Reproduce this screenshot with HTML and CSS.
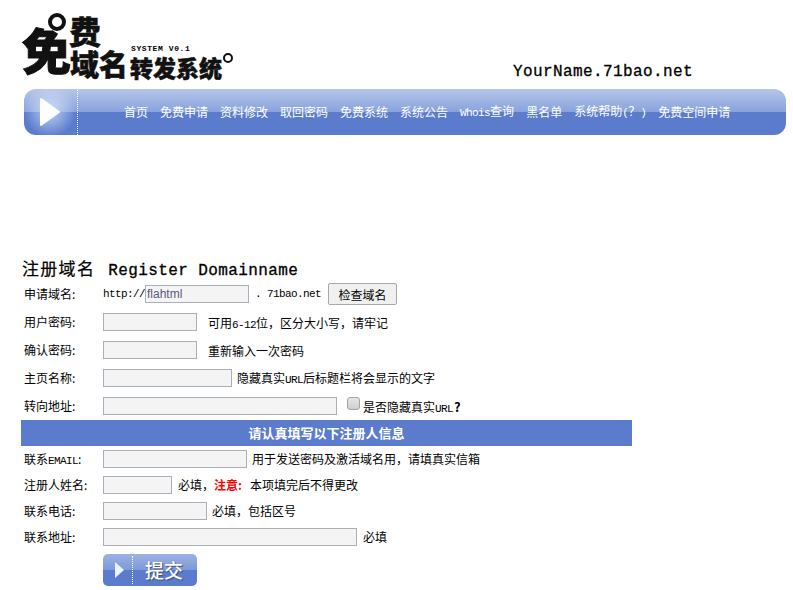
FILE: index.html
```html
<!DOCTYPE html>
<html lang="zh">
<head>
<meta charset="utf-8">
<title>注册域名</title>
<link rel="stylesheet" href="styles.css">
</head>
<body>
<header class="top">
  <div class="logo">
    <span class="lg lg-mian">免</span>
    <span class="lg lg-fei">费</span>
    <span class="lg lg-yu">域名</span>
    <span class="lg lg-zhuan">转发系统</span>
    <span class="lg-sys">SYSTEM V0.1</span>
    <i class="ring ring-big"></i>
    <i class="ring ring-small"></i>
  </div>
  <div class="domain">YourName.71bao.net</div>
</header>
<nav class="nav">
  <div class="nav-icon">
    <svg class="nav-play" width="22" height="30" viewBox="0 0 22 30"><path d="M2 2 L20 15 L2 28 Z" fill="#fff" stroke="#fff" stroke-width="2" stroke-linejoin="round"/></svg>
  </div>
  <div class="nav-items">
    <a>首页</a><a>免费申请</a><a>资料修改</a><a>取回密码</a><a>免费系统</a><a>系统公告</a><a><span class="lat">Whois</span>查询</a><a>黑名单</a><a>系统帮助<span class="lat">(</span>？<span class="lat">)</span></a><a>免费空间申请</a>
  </div>
</nav>
<main class="form">
  <h1 class="title">注册域名<span class="title-lat">Register Domainname</span></h1>
  <div class="row">
    <label class="lbl">申请域名:</label>
    <span class="lat">http://</span><input class="inp w104 inp-val" type="text" value="flahtml">
    <span class="lat dot">. 71bao.net</span><button class="check" type="button">检查域名</button>
  </div>
  <div class="row">
    <label class="lbl">用户密码:</label>
    <input class="inp w94" type="text"><span class="note note-w">可用<span class="lat">6-12</span>位，区分大小写，请牢记</span>
  </div>
  <div class="row">
    <label class="lbl">确认密码:</label>
    <input class="inp w94" type="text"><span class="note note-w">重新输入一次密码</span>
  </div>
  <div class="row">
    <label class="lbl">主页名称:</label>
    <input class="inp w129" type="text"><span class="note">隐藏真实<span class="lat">URL</span>后标题栏将会显示的文字</span>
  </div>
  <div class="row">
    <label class="lbl">转向地址:</label>
    <input class="inp w234" type="text"><input class="cb" type="checkbox"><span class="note-cb">是否隐藏真实<span class="lat">URL</span><b class="q">?</b></span>
  </div>
  <div class="banner">请认真填写以下注册人信息</div>
  <div class="row row-s">
    <label class="lbl">联系<span class="lat">EMAIL</span>:</label>
    <input class="inp w144" type="text"><span class="note">用于发送密码及激活域名用，请填真实信箱</span>
  </div>
  <div class="row row-s">
    <label class="lbl">注册人姓名:</label>
    <input class="inp w69" type="text"><span class="note note-n">必填，<b class="warn">注意:</b>本项填完后不得更改</span>
  </div>
  <div class="row row-s">
    <label class="lbl">联系电话:</label>
    <input class="inp w104" type="text"><span class="note">必填，包括区号</span>
  </div>
  <div class="row row-s">
    <label class="lbl">联系地址:</label>
    <input class="inp w254" type="text"><span class="note note-n">必填</span>
  </div>
  <button class="submit" type="button">
    <svg class="submit-play" width="11" height="18" viewBox="0 0 11 18"><path d="M1 1 L10 9 L1 17 Z" fill="#eef2fb"/></svg>
    <span class="submit-text">提交</span>
  </button>
</main>
</body>
</html>
```
FILE: styles.css
```css
* { box-sizing: border-box; }
html, body { margin: 0; padding: 0; overflow: hidden; }
body {
  height: 590px;
  background: #fff;
  color: #000;
  font-family: "Noto Sans CJK SC", sans-serif;
  font-size: 12px;
}
.top {
  height: 89px;
  display: flex;
  align-items: flex-end;
}
.logo {
  position: relative;
  width: 513px;
  height: 89px;
  flex: none;
}
.lg {
  position: absolute;
  font-weight: 900;
  line-height: 1;
  color: #111;
  white-space: nowrap;
  -webkit-text-stroke: 0.5px #111;
}
.lg-mian { left: 22px; top: 24px; font-size: 49px; -webkit-text-stroke-width: 1px; }
.lg-fei { left: 69px; top: 14px; font-size: 32px; }
.lg-yu { left: 70px; top: 49px; font-size: 29px; }
.lg-zhuan { left: 130px; top: 56px; font-size: 23px; }
.lg-sys {
  position: absolute;
  left: 131px;
  top: 44px;
  font-family: "Liberation Mono", monospace;
  font-size: 8px;
  font-weight: 700;
  letter-spacing: 0.6px;
  line-height: 10px;
  white-space: nowrap;
}
.ring {
  position: absolute;
  border-style: solid;
  border-color: #111;
  border-radius: 50%;
  background: #fff;
}
.ring-big { left: 48px; top: 13px; width: 18px; height: 18px; border-width: 4px; }
.ring-small { left: 223px; top: 53px; width: 10px; height: 10px; border-width: 2px; }
.domain {
  font-family: "Liberation Mono", monospace;
  font-size: 16px;
  letter-spacing: 0.4px;
  line-height: 20px;
  margin-bottom: 7px;
  white-space: nowrap;
  -webkit-text-stroke: 0.3px #000;
}
.nav {
  margin-left: 24px;
  width: 762px;
  height: 46px;
  border-radius: 12px;
  display: flex;
  background: linear-gradient(#b6c6e9 0, #88a2dc 50%, #5b7ccd 50%, #5b7ccd 100%);
  overflow: hidden;
}
.nav-icon {
  width: 54px;
  flex: none;
  display: flex;
  align-items: center;
  padding-left: 15px;
  border-right: 1px dotted #fff;
  background: radial-gradient(circle at 26px 22px, rgba(225, 238, 255, 0.75) 0, rgba(225, 238, 255, 0) 26px);
}
.nav-items {
  display: flex;
  align-items: center;
  gap: 12px;
  padding-left: 46px;
  color: #fff;
  white-space: nowrap;
  line-height: 46px;
}
.form {
  margin: 125px 0 0 21px;
  width: 611px;
}
.title {
  margin: 0 0 0 1px;
  font-size: 17px;
  font-weight: 400;
  line-height: 16px;
  height: 20px;
  letter-spacing: 1.3px;
  white-space: nowrap;
  -webkit-text-stroke: 0.2px #000;
}
.title-lat {
  margin-left: 13px;
  font-family: "Liberation Mono", monospace;
  font-size: 16px;
  letter-spacing: 0.4px;
  -webkit-text-stroke: 0.3px #000;
}
.row {
  display: flex;
  align-items: center;
  height: 28px;
  white-space: nowrap;
}
.row-s { height: 26px; }
.lbl { width: 82px; padding-left: 3px; flex: none; margin-bottom: 2px; }
.lat {
  font-family: "Liberation Mono", monospace;
  font-size: 11px;
  letter-spacing: -0.6px;
}
.inp {
  height: 18px;
  padding: 0 1px;
  border: 1px solid #a8afb9;
  background: #f4f4f4;
  font-family: "Liberation Sans", sans-serif;
  font-size: 12px;
  border-radius: 0;
  outline: none;
  flex: none;
}
.inp-val { color: #5d5480; }
.w69 { width: 69px; }
.w94 { width: 94px; }
.w104 { width: 104px; }
.w129 { width: 129px; }
.w144 { width: 144px; }
.w234 { width: 234px; }
.w254 { width: 254px; }
.dot { margin-left: 6px; }
.check {
  height: 22px;
  width: 69px;
  margin-left: 7px;
  padding: 0;
  border: 1px solid #a8a8a8;
  border-radius: 2px;
  background: #f0f0f0;
  color: #000;
  font-family: inherit;
  font-size: 12px;
}
.note { margin-left: 5px; margin-bottom: 2px; }
.note-w { margin-left: 11px; margin-bottom: 0; }
.note-n { margin-left: 6px; }
.note-cb { margin-bottom: 0; }
.q { margin-left: 1px; font-size: 13px; }
.cb {
  appearance: none;
  width: 13px;
  height: 13px;
  margin: 0 3px 5px 10px;
  border: 1px solid #a4a4a4;
  border-radius: 3px;
  background: linear-gradient(#e6e6e6, #cfcfcf);
  flex: none;
}
.banner {
  height: 26px;
  line-height: 26px;
  background: #5b7ccd;
  color: #fff;
  font-size: 13px;
  font-weight: 700;
  text-align: center;
}
.warn { display: inline-block; width: 36px; color: #f00; font-weight: 700; }
.submit {
  display: flex;
  align-items: center;
  margin: 4px 0 0 82px;
  width: 94px;
  height: 32px;
  padding: 0 0 0 11px;
  border: 0;
  border-radius: 5px;
  background: linear-gradient(#9db2e3 0, #7e99d9 50%, #5b7ccd 50%, #5b7ccd 100%);
  position: relative;
}
.submit::before {
  content: "";
  position: absolute;
  left: 29px;
  top: 2px;
  bottom: 2px;
  border-left: 1px dotted #fff;
}
.submit-play { flex: none; }
.submit-text {
  margin-left: 20px;
  color: #fff;
  font-family: "Noto Sans CJK SC", sans-serif;
  font-size: 19px;
  font-weight: 500;
  line-height: 32px;
  text-shadow: 1px 1px 1px #3c4a6e;
}
```
